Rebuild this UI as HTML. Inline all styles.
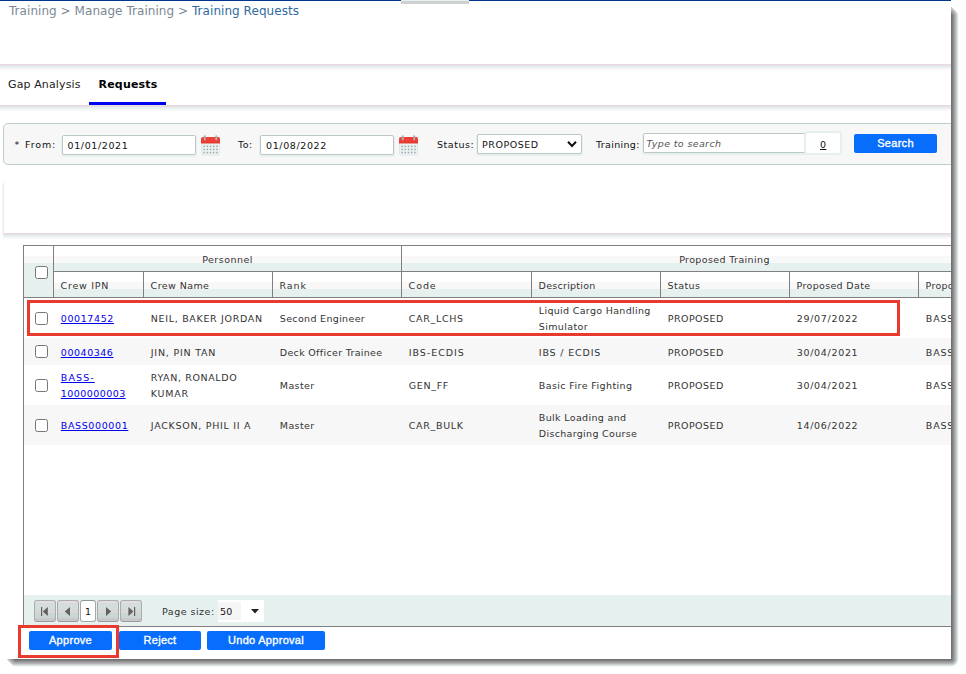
<!DOCTYPE html>
<html>
<head>
<meta charset="utf-8">
<title>Training Requests</title>
<style>
html,body{margin:0;padding:0;background:#fff;}
body{width:966px;height:674px;overflow:hidden;position:relative;font-family:"DejaVu Sans","Liberation Sans",sans-serif;font-size:9.5px;color:#333;}
#page{position:absolute;left:0;top:0;width:951px;height:659px;overflow:hidden;background:#fff;}
.abs{position:absolute;}
.t{position:absolute;white-space:nowrap;line-height:16px;height:16px;}
#shr{position:absolute;left:951px;top:7px;width:8px;height:652px;background:linear-gradient(to right,#6a6a6a 0,#7e7e7e 1.5px,#9c9c9c 3px,#b2b2b8 4.5px,#d2dada 6px,#eef3f3 7.2px,#fff 8px);clip-path:polygon(0 0,100% 7px,100% 100%,0 100%);}
#shb{position:absolute;left:7px;top:659px;width:944px;height:8px;background:linear-gradient(to bottom,#6a6a6a 0,#7e7e7e 1.5px,#9c9c9c 3px,#b2b2b8 4.5px,#d2dada 6px,#eef3f3 7.2px,#fff 8px);clip-path:polygon(0 0,100% 0,100% 100%,7px 100%);}
#shc{position:absolute;left:951px;top:659px;width:8px;height:8px;background:radial-gradient(circle at 0 0,#6a6a6a 0,#7e7e7e 1.5px,#9c9c9c 3px,#b2b2b8 4.5px,#d2dada 6px,#eef3f3 7.2px,#fff 8px);}
#shr:after{content:'';position:absolute;left:0;top:0;width:8px;height:8px;background:linear-gradient(to bottom,rgba(255,255,255,.75),rgba(255,255,255,0));}
#shb:after{content:'';position:absolute;left:0;top:0;width:8px;height:8px;background:linear-gradient(to right,rgba(255,255,255,.75),rgba(255,255,255,0));}
#topline{left:0;top:0;width:951px;height:1px;background:#00388f;}
#topgap{left:401px;top:0;width:68px;height:1px;background:#e6f0ee;}
#topbar{left:401px;top:1px;width:68px;height:3px;background:#d0d0d0;}
.sepline{left:0;width:951px;height:6px;background:linear-gradient(to bottom,#e8dce4 0,#e8dce4 2px,#e6f0ee 2px,#e6f0ee 4px,#f8f8f8 4px,#f8f8f8 6px);}
#crumb{left:9px;top:2px;font-size:12px;color:#7b8794;line-height:18px;height:18px;letter-spacing:0.05px;}
#crumb b{font-weight:normal;color:#2f6a9f;}
.tab{font-size:11px;color:#222;}
#tabul{left:89px;top:102px;width:77px;height:3px;background:#0000f0;}
#filter{left:3px;top:123px;width:960px;height:40px;border:1px solid #c0cccc;border-radius:5px;background:#f7f7f7;}
.inp{position:absolute;background:#fff;border:1px solid #bcc8c8;border-radius:2px;box-shadow:0 1px 0 1px #e6f0ee;box-sizing:border-box;}
.fl{color:#111;}
.btn{position:absolute;background:#076dfd;border-radius:2px;color:#fff;font-family:"Liberation Sans",sans-serif;font-size:11px;text-align:center;line-height:19px;height:19px;-webkit-text-stroke:0.35px #fff;letter-spacing:0.3px;}
#panel{left:4px;top:182px;width:960px;height:51px;background:#fff;box-shadow:0 1px 0 #e8dce4,0 2px 0 #e8dce4,0 3px 0 #e6f0ee,-1px 4px 0 #e6f0ee,-1px 6px 0 #f8f8f8,-1px 0 0 #eef2f2,-2px 2px 0 #f6f6f6;}
#grid{left:23px;top:245px;width:1100px;height:380px;border:1px solid #7f7f7f;border-right:none;background:#fff;}
.hd{position:absolute;box-sizing:border-box;border-left:1px solid #7f7f7f;}
.hg{background:linear-gradient(to bottom,#fff 0,#fff 10px,#f8f8f8 10px,#f8f8f8 17px,#e6f0ee 17px,#e6f0ee 100%);}
.row{position:absolute;left:24px;width:940px;}
.alt{background:#f7f7f7;}
.cb{position:absolute;width:11px;height:11px;border:1px solid #767676;border-radius:2.5px;background:#fff;}
a.lk{color:#0000ee;text-decoration:underline;}
.red{position:absolute;border:3px solid #e93a30;box-sizing:border-box;}
.pb{position:absolute;top:600px;width:20px;height:20px;border:1px solid #a9a9a9;border-radius:3px;background:linear-gradient(to bottom,#e8dce4 0,#e8dce4 2px,#d4dcdc 2px,#d4dcdc 8px,#d8d8d8 8px,#d8d8d8 12px,#ccd4d4 12px,#ccd4d4 17px,#c8c8c8 17px);border-color:#a8acac #a8acac #999c9c #a8acac;}
</style>
</head>
<body>
<div id="page">
  <div class="abs" id="topline"></div>
  <div class="abs" id="topgap"></div>
  <div class="abs" id="topbar"></div>
  <div class="t" id="crumb">Training &gt; Manage Training &gt; <b>Training Requests</b></div>
  <div class="abs sepline" style="top:64px"></div>
  <div class="t tab" style="left:8px;top:77px;letter-spacing:0.12px;">Gap Analysis</div>
  <div class="t tab" style="left:98.5px;top:77px;font-weight:bold;color:#000;letter-spacing:0.2px;">Requests</div>
  <div class="abs sepline" style="top:105px"></div>
  <div class="abs" id="tabul"></div>
  <div class="abs" id="filter"></div>
  <div class="t fl" style="left:14.4px;top:137px;letter-spacing:0.859px;word-spacing:1.2px;">* From:</div>
  <div class="inp" style="left:62px;top:135px;width:134px;height:20px;"></div>
  <div class="t fl" style="left:67.5px;top:138px;letter-spacing:0.618px;">01/01/2021</div>
  <svg class="abs" style="left:201px;top:135px" width="19" height="21" viewBox="0 0 19 21">
<rect x="0.5" y="2.5" width="18" height="17.5" rx="1.5" fill="#eaf3f3" stroke="#e0e8e8" stroke-width="1"/>
<path d="M0 4 Q0 2 2 2 L17 2 Q19 2 19 4 L19 8.3 L0 8.3 Z" fill="#ee3e36"/>
<rect x="0" y="7.3" width="19" height="1" fill="#dc382f"/>
<rect x="2.8" y="0.3" width="1.9" height="5" rx="0.9" fill="#a4b4b9"/>
<rect x="14.3" y="0.3" width="1.9" height="5" rx="0.9" fill="#a4b4b9"/>
<g fill="#a9a3a8"><rect x="2.4" y="10.6" width="1.5" height="1.5"/><rect x="2.4" y="13.7" width="1.5" height="1.5"/><rect x="2.4" y="16.8" width="1.5" height="1.5"/><rect x="5.6" y="10.6" width="1.5" height="1.5"/><rect x="5.6" y="13.7" width="1.5" height="1.5"/><rect x="5.6" y="16.8" width="1.5" height="1.5"/><rect x="8.8" y="10.6" width="1.5" height="1.5"/><rect x="8.8" y="13.7" width="1.5" height="1.5"/><rect x="8.8" y="16.8" width="1.5" height="1.5"/><rect x="12.000000000000002" y="10.6" width="1.5" height="1.5"/><rect x="12.000000000000002" y="13.7" width="1.5" height="1.5"/><rect x="12.000000000000002" y="16.8" width="1.5" height="1.5"/><rect x="15.200000000000001" y="10.6" width="1.5" height="1.5"/><rect x="15.200000000000001" y="13.7" width="1.5" height="1.5"/><rect x="15.200000000000001" y="16.8" width="1.5" height="1.5"/></g>
</svg>
  <div class="t fl" style="left:238px;top:137px;letter-spacing:0.532px;">To:</div>
  <div class="inp" style="left:260px;top:135px;width:134px;height:20px;"></div>
  <div class="t fl" style="left:266px;top:138px;letter-spacing:0.618px;">01/08/2022</div>
  <svg class="abs" style="left:399px;top:135px" width="19" height="21" viewBox="0 0 19 21">
<rect x="0.5" y="2.5" width="18" height="17.5" rx="1.5" fill="#eaf3f3" stroke="#e0e8e8" stroke-width="1"/>
<path d="M0 4 Q0 2 2 2 L17 2 Q19 2 19 4 L19 8.3 L0 8.3 Z" fill="#ee3e36"/>
<rect x="0" y="7.3" width="19" height="1" fill="#dc382f"/>
<rect x="2.8" y="0.3" width="1.9" height="5" rx="0.9" fill="#a4b4b9"/>
<rect x="14.3" y="0.3" width="1.9" height="5" rx="0.9" fill="#a4b4b9"/>
<g fill="#a9a3a8"><rect x="2.4" y="10.6" width="1.5" height="1.5"/><rect x="2.4" y="13.7" width="1.5" height="1.5"/><rect x="2.4" y="16.8" width="1.5" height="1.5"/><rect x="5.6" y="10.6" width="1.5" height="1.5"/><rect x="5.6" y="13.7" width="1.5" height="1.5"/><rect x="5.6" y="16.8" width="1.5" height="1.5"/><rect x="8.8" y="10.6" width="1.5" height="1.5"/><rect x="8.8" y="13.7" width="1.5" height="1.5"/><rect x="8.8" y="16.8" width="1.5" height="1.5"/><rect x="12.000000000000002" y="10.6" width="1.5" height="1.5"/><rect x="12.000000000000002" y="13.7" width="1.5" height="1.5"/><rect x="12.000000000000002" y="16.8" width="1.5" height="1.5"/><rect x="15.200000000000001" y="10.6" width="1.5" height="1.5"/><rect x="15.200000000000001" y="13.7" width="1.5" height="1.5"/><rect x="15.200000000000001" y="16.8" width="1.5" height="1.5"/></g>
</svg>
  <div class="t fl" style="left:437px;top:137px;letter-spacing:0.552px;">Status:</div>
  <div class="inp" style="left:477px;top:134px;width:105px;height:20px;"></div>
  <div class="t fl" style="left:482px;top:137px;letter-spacing:0.544px;">PROPOSED</div>
  <svg class="abs" style="left:566px;top:140px" width="12" height="9" viewBox="0 0 12 9"><path d="M2 1.8 L6 6 L10 1.8" fill="none" stroke="#111" stroke-width="2"/></svg>
  <div class="t fl" style="left:596px;top:137px;letter-spacing:0.338px;">Training:</div>
  <div class="inp" style="left:643px;top:133px;width:163px;height:20px;"></div>
  <div class="t" style="left:646.5px;top:136px;letter-spacing:0.359px;color:#555;font-style:italic;">Type to search</div>
  <div class="abs" style="left:806px;top:133px;width:34px;height:20px;background:#fff;box-shadow:0 0 0 2px #e6f0ee;border-radius:2px;"></div>
  <div class="t fl" style="left:820px;top:137px;letter-spacing:0.318px;text-decoration:underline;">0</div>
  <div class="btn" style="left:854px;top:134px;width:83px;">Search</div>
  <div class="abs" id="panel"></div>
  <div class="abs" id="grid"></div>
  <div class="abs hg" style="left:24px;top:246px;width:29px;height:51px;"></div>
  <div class="cb" style="left:35px;top:266px;"></div>
  <div class="hd hg" style="left:53px;top:246px;width:348px;height:25px;"></div>
  <div class="hd hg" style="left:401px;top:246px;width:700px;height:25px;"></div>
  <div class="abs" style="left:53px;top:271px;width:1000px;height:1px;background:#7f7f7f;"></div>
  <div class="t" style="left:54px;top:252px;letter-spacing:0.472px;width:347px;text-align:center;">Personnel</div>
  <div class="t" style="left:402px;top:252px;letter-spacing:0.381px;width:645px;text-align:center;">Proposed Training</div>
  <div class="hd hg" style="left:53px;top:272px;width:90px;height:25px;"></div>
  <div class="t" style="left:60.6px;top:278px;letter-spacing:0.73px;">Crew IPN</div>
  <div class="hd hg" style="left:143px;top:272px;width:129px;height:25px;"></div>
  <div class="t" style="left:150.6px;top:278px;letter-spacing:0.422px;">Crew Name</div>
  <div class="hd hg" style="left:272px;top:272px;width:129px;height:25px;"></div>
  <div class="t" style="left:279.6px;top:278px;letter-spacing:0.862px;">Rank</div>
  <div class="hd hg" style="left:401px;top:272px;width:130px;height:25px;"></div>
  <div class="t" style="left:408.6px;top:278px;letter-spacing:0.92px;">Code</div>
  <div class="hd hg" style="left:531px;top:272px;width:129px;height:25px;"></div>
  <div class="t" style="left:538.6px;top:278px;letter-spacing:0.259px;">Description</div>
  <div class="hd hg" style="left:660px;top:272px;width:129px;height:25px;"></div>
  <div class="t" style="left:667.6px;top:278px;letter-spacing:0.416px;">Status</div>
  <div class="hd hg" style="left:789px;top:272px;width:129px;height:25px;"></div>
  <div class="t" style="left:796.6px;top:278px;letter-spacing:0.331px;">Proposed Date</div>
  <div class="hd hg" style="left:918px;top:272px;width:129px;height:25px;"></div>
  <div class="t" style="left:925.6px;top:278px;letter-spacing:0.282px;">Proposed By</div>
  <div class="abs" style="left:24px;top:297px;width:1000px;height:1px;background:#7f7f7f;"></div>
  <div class="row" style="top:298px;height:40px;"></div>
  <div class="cb" style="left:35px;top:312px;"></div>
  <div class="t" style="left:60.8px;top:311px;letter-spacing:0.598px;"><a class="lk">00017452</a></div>
  <div class="t" style="left:150.8px;top:311px;letter-spacing:0.682px;">NEIL, BAKER JORDAN</div>
  <div class="t" style="left:279.8px;top:311px;letter-spacing:0.332px;">Second Engineer</div>
  <div class="t" style="left:408.8px;top:311px;letter-spacing:0.666px;">CAR_LCHS</div>
  <div class="t" style="left:538.8px;top:303px;letter-spacing:0.323px;">Liquid Cargo Handling</div>
  <div class="t" style="left:538.8px;top:319px;letter-spacing:0.368px;">Simulator</div>
  <div class="t" style="left:667.8px;top:311px;letter-spacing:0.444px;">PROPOSED</div>
  <div class="t" style="left:796.8px;top:311px;letter-spacing:0.678px;">29/07/2022</div>
  <div class="t" style="left:925.8px;top:311px;letter-spacing:0.83px;">BASS</div>
  <div class="row alt" style="top:338px;height:27px;"></div>
  <div class="cb" style="left:35px;top:345px;"></div>
  <div class="t" style="left:60.8px;top:345px;letter-spacing:0.538px;"><a class="lk">00040346</a></div>
  <div class="t" style="left:150.8px;top:345px;letter-spacing:0.776px;">JIN, PIN TAN</div>
  <div class="t" style="left:279.8px;top:345px;letter-spacing:0.323px;">Deck Officer Trainee</div>
  <div class="t" style="left:408.8px;top:345px;letter-spacing:0.957px;">IBS-ECDIS</div>
  <div class="t" style="left:538.8px;top:345px;letter-spacing:0.835px;">IBS / ECDIS</div>
  <div class="t" style="left:667.8px;top:345px;letter-spacing:0.444px;">PROPOSED</div>
  <div class="t" style="left:796.8px;top:345px;letter-spacing:0.678px;">30/04/2021</div>
  <div class="t" style="left:925.8px;top:345px;letter-spacing:0.83px;">BASS</div>
  <div class="row" style="top:365px;height:40px;"></div>
  <div class="cb" style="left:35px;top:379px;"></div>
  <div class="t" style="left:60.8px;top:370px;letter-spacing:1.1px;"><a class="lk">BASS-</a></div>
  <div class="t" style="left:60.8px;top:386px;letter-spacing:0.438px;"><a class="lk">1000000003</a></div>
  <div class="t" style="left:150.8px;top:370px;letter-spacing:0.618px;">RYAN, RONALDO</div>
  <div class="t" style="left:150.8px;top:386px;letter-spacing:0.76px;">KUMAR</div>
  <div class="t" style="left:279.8px;top:378px;letter-spacing:0.385px;">Master</div>
  <div class="t" style="left:408.8px;top:378px;letter-spacing:0.677px;">GEN_FF</div>
  <div class="t" style="left:538.8px;top:378px;letter-spacing:0.398px;">Basic Fire Fighting</div>
  <div class="t" style="left:667.8px;top:378px;letter-spacing:0.444px;">PROPOSED</div>
  <div class="t" style="left:796.8px;top:378px;letter-spacing:0.678px;">30/04/2021</div>
  <div class="t" style="left:925.8px;top:378px;letter-spacing:0.83px;">BASS</div>
  <div class="row alt" style="top:405px;height:40px;"></div>
  <div class="cb" style="left:35px;top:419px;"></div>
  <div class="t" style="left:60.8px;top:418px;letter-spacing:0.623px;"><a class="lk">BASS000001</a></div>
  <div class="t" style="left:150.8px;top:418px;letter-spacing:0.716px;">JACKSON, PHIL II A</div>
  <div class="t" style="left:279.8px;top:418px;letter-spacing:0.385px;">Master</div>
  <div class="t" style="left:408.8px;top:418px;letter-spacing:0.666px;">CAR_BULK</div>
  <div class="t" style="left:538.8px;top:410px;letter-spacing:0.35px;">Bulk Loading and</div>
  <div class="t" style="left:538.8px;top:426px;letter-spacing:0.321px;">Discharging Course</div>
  <div class="t" style="left:667.8px;top:418px;letter-spacing:0.444px;">PROPOSED</div>
  <div class="t" style="left:796.8px;top:418px;letter-spacing:0.678px;">14/06/2022</div>
  <div class="t" style="left:925.8px;top:418px;letter-spacing:0.83px;">BASS</div>
  <div class="abs" style="left:24px;top:595px;width:940px;height:31px;background:#e6f0ee;"></div>
  <div class="pb" style="left:34px;"><svg width="20" height="20" viewBox="0 0 20 20" style="position:absolute;left:0;top:0"><rect x="6" y="6" width="1.2" height="9" fill="#606060"/><path d="M12.8 6 L12.8 15 L7.8 10.5 Z" fill="#606060"/></svg></div>
  <div class="pb" style="left:57px;"><svg width="20" height="20" viewBox="0 0 20 20" style="position:absolute;left:0;top:0"><path d="M12 6 L12 15 L6.8 10.5 Z" fill="#606060"/></svg></div>
  <div class="abs" style="left:80px;top:600px;width:14px;height:20px;border:1px solid #a0a8a8;border-top-color:#8c9898;border-radius:3px;background:#fff;"></div>
  <div class="t fl" style="left:85px;top:604px;letter-spacing:0.318px;">1</div>
  <div class="pb" style="left:97px;"><svg width="20" height="20" viewBox="0 0 20 20" style="position:absolute;left:0;top:0"><path d="M8 6 L8 15 L13.2 10.5 Z" fill="#606060"/></svg></div>
  <div class="pb" style="left:120px;"><svg width="20" height="20" viewBox="0 0 20 20" style="position:absolute;left:0;top:0"><rect x="13" y="6" width="1.2" height="9" fill="#606060"/><path d="M7.4 6 L7.4 15 L12.4 10.5 Z" fill="#606060"/></svg></div>
  <div class="t" style="left:162px;top:604px;letter-spacing:0.501px;">Page size:</div>
  <div class="abs" style="left:218px;top:600px;width:46px;height:22px;background:#fff;"></div>
  <div class="abs" style="left:218px;top:602px;width:23px;height:18px;background:#f5f5f5;"></div>
  <div class="t fl" style="left:220px;top:604px;letter-spacing:0.318px;">50</div>
  <svg class="abs" style="left:250px;top:608px" width="10" height="6" viewBox="0 0 10 6"><path d="M1 1 L9 1 L5 5.5 Z" fill="#222"/></svg>
  <div class="btn" style="left:29px;top:631px;width:83px;">Approve</div>
  <div class="btn" style="left:119px;top:631px;width:82px;">Reject</div>
  <div class="btn" style="left:207px;top:631px;width:118px;">Undo Approval</div>
  <div class="red" style="left:27px;top:300px;width:873px;height:36px;"></div>
  <div class="red" style="left:18px;top:625px;width:101px;height:33px;"></div>
</div>
<div id="shr"></div>
<div id="shb"></div>
<div id="shc"></div>
</body>
</html>
